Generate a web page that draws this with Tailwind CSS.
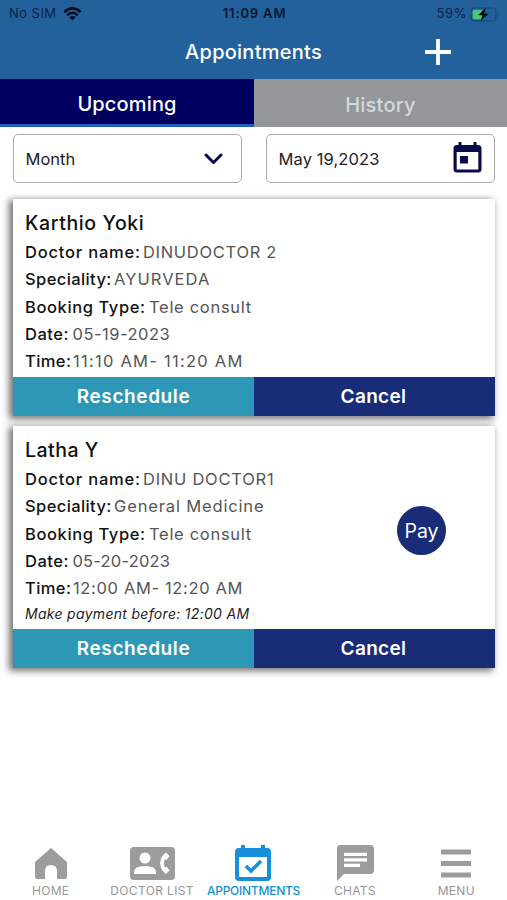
<!DOCTYPE html>
<html lang="en">
<head>
<meta charset="utf-8">
<title>Appointments</title>
<script src="https://cdn.jsdelivr.net/npm/@tailwindcss/browser@4"></script>
</head>
<body class="bg-white">
<div class="w-[507px] h-[900px] flex flex-col overflow-hidden bg-white font-['Inter','Liberation_Sans',sans-serif] whitespace-nowrap">
  <header class="h-[79px] shrink-0 bg-[#23619d]">
    <div class="h-7 grid grid-cols-3 items-center pl-[9px] pr-[7px] text-[13px] text-[#0b2341]">
      <div class="flex items-center gap-1.5"><span class="tracking-[0.45px]">No SIM</span>
        <svg class="w-[19px] h-[14px]" viewBox="0 0 19 14" fill="none" stroke="#030b18" stroke-width="2.5"><path d="M1.3 5.1Q9.5-2.3 17.7 5.1M4.2 8.2Q9.5 3.4 14.8 8.2"/><path d="M9.5 13.4L6.3 10.2Q9.5 7.6 12.7 10.2Z" fill="#030b18" stroke="none"/></svg>
      </div>
      <span class="text-center font-semibold tracking-[0.85px] text-[#06172f]">11:09 AM</span>
      <div class="flex items-center justify-end gap-[3px]"><span class="tracking-[0.6px]">59%</span>
        <svg class="w-[30px] h-[15px]" viewBox="0 0 30 15"><rect x="1" y="1" width="25" height="13" rx="3.5" fill="none" stroke="#1c4774" stroke-width="1.2"/><path d="M28 5Q30 7.5 28 10Z" fill="#1c4774"/><path d="M4.5 2.7H12V12.3H4.5Q2.7 12.3 2.7 10.5V4.5Q2.7 2.7 4.5 2.7Z" fill="#48c874"/><path d="M16 .7L8 8.3H12.5L10.5 14.3L18.7 6.6H14.1Z" fill="#030b18"/></svg>
      </div>
    </div>
    <div class="h-[48px] grid grid-cols-[1fr_137px_1fr] items-center">
      <span></span>
      <h1 class="text-[20px] leading-6 font-medium text-white text-center tracking-[0.25px]">Appointments</h1>
      <svg class="w-[26px] h-[26px] ml-[103px]" viewBox="0 0 26 26" stroke="#fff" stroke-width="3.8"><path d="M13 0V26M0 13H26"/></svg>
    </div>
  </header>
  <nav class="h-[48px] shrink-0 flex text-[20px] font-medium">
    <div class="w-[254px] bg-[#000061] text-white flex items-center justify-center border-b-[3px] border-[#205fc0] pt-[5px] tracking-[0.15px]">Upcoming</div>
    <div class="flex-1 bg-[#939799] text-[#d5d8da] flex items-center justify-center pt-[3px] tracking-[0.25px]">History</div>
  </nav>
  <div class="grid grid-cols-2 gap-6 pl-[13px] pr-3 pt-[7px] shrink-0 text-[16.5px] text-[#222]">
    <div class="h-[49px] rounded-[5px] border border-[#aaa] flex items-center justify-between pl-[11.5px] pr-[18px]">
      <span class="pt-px">Month</span>
      <svg class="w-[19px] h-[12px]" viewBox="0 0 19 12" fill="none" stroke="#090a4d" stroke-width="3" stroke-linecap="round" stroke-linejoin="round"><path d="M2 2L9.5 9.5L17 2"/></svg>
    </div>
    <div class="h-[49px] rounded-[5px] border border-[#aaa] flex items-center justify-between pl-[11.5px] pr-[12px]">
      <span class="pt-px tracking-[0.1px]">May 19,2023</span>
      <svg class="w-[29px] h-[32px] -mt-1" viewBox="0 0 29 32"><path fill="#080a4a" fill-rule="evenodd" d="M5.5 1H8.5V4H20.5V1H23.5V4H25Q28.5 4 28.5 7.5V28Q28.5 31.5 25 31.5H4Q.5 31.5.5 28V7.5Q.5 4 4 4H5.5ZM3.7 11V28.4H25.3V11Z"/><rect x="7" y="15" width="8" height="7.5" fill="#080a4a"/></svg>
    </div>
  </div>
  <main class="pl-[13px] pr-3 pt-4 flex flex-col gap-[10px] shrink-0 text-[16.5px] leading-[27.3px]">
    <article class="h-[217px] bg-white shadow-[-3px_2px_7px_1px_rgba(0,0,0,0.55)] flex flex-col justify-between">
      <div class="pl-3 pt-[10px] text-[#555]">
        <h2 class="text-[19.5px] leading-7 font-medium text-[#111] tracking-[0.6px]">Karthio Yoki</h2>
        <div class="flex pt-[2px]"><b class="font-medium text-[#111] w-[118px] tracking-[0.8px]">Doctor name:</b><span class="tracking-[0.7px]">DINUDOCTOR 2</span></div>
        <div class="flex"><b class="font-medium text-[#111] w-[89px] tracking-[0.4px]">Speciality:</b><span class="tracking-[1.05px]">AYURVEDA</span></div>
        <div class="flex"><b class="font-medium text-[#111] w-[124px] tracking-[0.6px]">Booking Type:</b><span class="tracking-[0.7px]">Tele consult</span></div>
        <div class="flex"><b class="font-medium text-[#111] w-[47.500px] tracking-[0.500px]">Date:</b><span class="tracking-[0.5px]">05-19-2023</span></div>
        <div class="flex"><b class="font-medium text-[#111] w-[48px] tracking-[0.4px]">Time:</b><span class="tracking-[1.25px]">11:10 AM- 11:20 AM</span></div>
      </div>
      <div class="h-[39px] flex text-[19px] font-semibold text-white"><div class="w-[241px] bg-[#2c98b5] flex items-center justify-center tracking-[0.6px] pt-px">Reschedule</div><div class="flex-1 bg-[#182c78] flex items-center justify-center pt-px pr-0.5 tracking-[0.35px]">Cancel</div></div>
    </article>
    <article class="relative h-[242px] bg-white shadow-[-3px_2px_7px_1px_rgba(0,0,0,0.55)] flex flex-col justify-between">
      <div class="pl-3 pt-[10px] text-[#555]">
        <h2 class="text-[19.5px] leading-7 font-medium text-[#111] tracking-[0.5px]">Latha Y</h2>
        <div class="flex pt-[2px]"><b class="font-medium text-[#111] w-[118px] tracking-[0.8px]">Doctor name:</b><span class="tracking-[0.75px]">DINU DOCTOR1</span></div>
        <div class="flex"><b class="font-medium text-[#111] w-[89px] tracking-[0.4px]">Speciality:</b><span class="tracking-[0.85px]">General Medicine</span></div>
        <div class="flex"><b class="font-medium text-[#111] w-[124px] tracking-[0.6px]">Booking Type:</b><span class="tracking-[0.7px]">Tele consult</span></div>
        <div class="flex"><b class="font-medium text-[#111] w-[47.500px] tracking-[0.500px]">Date:</b><span class="tracking-[0.2px]">05-20-2023</span></div>
        <div class="flex"><b class="font-medium text-[#111] w-[48px] tracking-[0.4px]">Time:</b><span class="tracking-[0.65px]">12:00 AM- 12:20 AM</span></div>
        <p class="text-[14px] leading-6 italic text-[#222] tracking-[0.3px]">Make payment before: 12:00 AM</p>
      </div>
      <button class="absolute right-[49px] top-[80px] w-[49px] h-[49px] rounded-full bg-[#182c78] text-white text-[19.5px] pt-0.5">Pay</button>
      <div class="h-[39px] flex text-[19px] font-semibold text-white"><div class="w-[241px] bg-[#2c98b5] flex items-center justify-center tracking-[0.6px] pt-px">Reschedule</div><div class="flex-1 bg-[#182c78] flex items-center justify-center pt-px pr-0.5 tracking-[0.35px]">Cancel</div></div>
    </article>
  </main>
  <footer class="mt-auto h-[60px] grid grid-cols-5 text-[12px] leading-4 text-[#969696] shrink-0">
    <div class="flex flex-col items-center"><svg class="w-[34px] h-[43px]" viewBox="0 0 34 43"><path fill="#9c9c9c" d="M17 8L33 22V36.5Q33 39 30.5 39H23V31Q23 25 17 25T11 31V39H3.500Q1 39 1 36.500V22Z"/></svg><span class="tracking-[0.3px]">HOME</span></div>
    <div class="flex flex-col items-center"><svg class="w-[46px] h-[43px]" viewBox="0 0 46 43"><rect x="1" y="7" width="45" height="33" rx="4" fill="#9c9c9c"/><circle cx="16" cy="18" r="5.500" fill="#fff"/><path d="M5 34V32Q5 26 16 26T27 32V34Z" fill="#fff"/><path d="M37 12.500L40.500 16L38 19.500H35.500Q34.300 23.300 35.500 27H38L40.500 30.500L37 34Q31.200 30 31.200 23.300T37 12.500Z" fill="#fff"/></svg><span class="tracking-[0.35px]">DOCTOR LIST</span></div>
    <div class="flex flex-col items-center text-[#158fd0]"><svg class="w-[38px] h-[43px]" viewBox="0 0 38 43"><path fill="#158fdc" fill-rule="evenodd" d="M7 5H11V8H27V5H31V8H33Q37 8 37 12V37Q37 41 33 41H5Q1 41 1 37V12Q1 8 5 8H7ZM5 17V37H33V17Z"/><path d="M12 26L17 31L27 21" fill="none" stroke="#158fdc" stroke-width="3.500"/></svg><span class="font-medium tracking-[-0.25px]">APPOINTMENTS</span></div>
    <div class="flex flex-col items-center"><svg class="w-[38px] h-[43px]" viewBox="0 0 38 43"><path fill="#9c9c9c" d="M4 5H34Q38 5 38 9V30Q38 34 34 34H8L1 41V9Q1 5 4 5Z"/><path d="M8 14.300H31M8 19.800H31M8 25.300H24" stroke="#fff" stroke-width="3.300"/></svg><span class="tracking-[0.3px]">CHATS</span></div>
    <div class="flex flex-col items-center"><svg class="w-[30px] h-[43px]" viewBox="0 0 30 43"><path d="M0 12H30M0 23.500H30M0 35H30" stroke="#9c9c9c" stroke-width="5"/></svg><span class="tracking-[0.3px]">MENU</span></div>
  </footer>
</div>
</body>
</html>
